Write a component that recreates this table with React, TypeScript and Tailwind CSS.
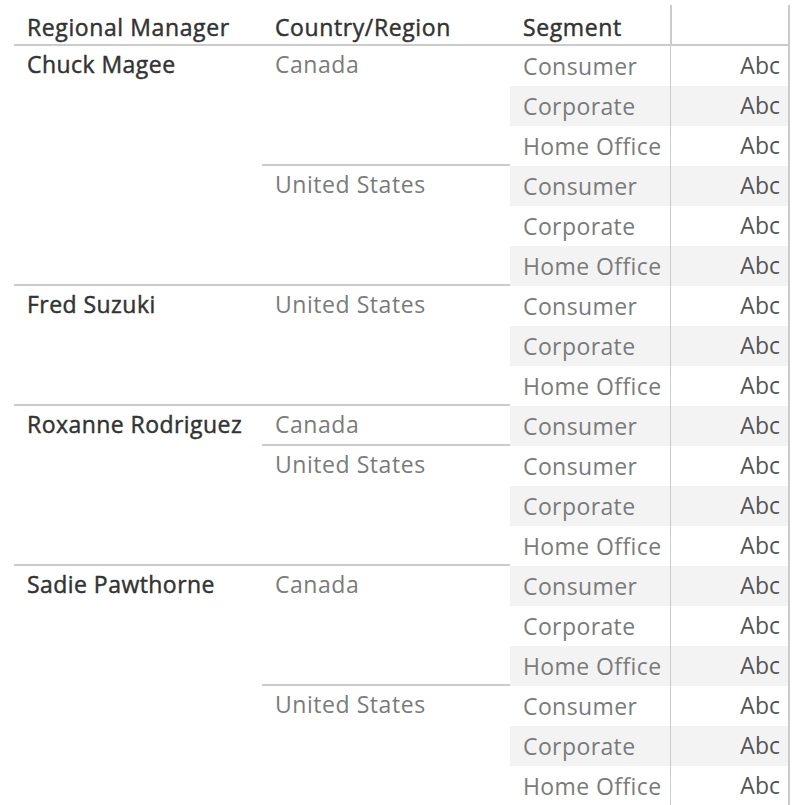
import React from "react";

type Country = { name: string; segments: string[] };
type Manager = { name: string; countries: Country[] };

const ALL = ["Consumer", "Corporate", "Home Office"];

const data: Manager[] = [
  { name: "Chuck Magee", countries: [{ name: "Canada", segments: ALL }, { name: "United States", segments: ALL }] },
  { name: "Fred Suzuki", countries: [{ name: "United States", segments: ALL }] },
  { name: "Roxanne Rodriguez", countries: [{ name: "Canada", segments: ["Consumer"] }, { name: "United States", segments: ALL }] },
  { name: "Sadie Pawthorne", countries: [{ name: "Canada", segments: ALL }, { name: "United States", segments: ALL }] },
];

const headCls =
  "pl-[13px] pt-[12px] text-[23px] leading-[30px] tracking-[0.6px] text-[#333333] whitespace-nowrap [-webkit-text-stroke:0.45px_#333333]";

export default function App() {
  let rowIndex = 0;
  return (
    <div
      className="w-[797px] h-[805px] overflow-hidden bg-white pl-[14px]"
      style={{ fontFamily: '"Open Sans", "Noto Sans", sans-serif' }}
    >
      <div className="w-[776px]">
        {/* header */}
        <div className="flex h-[46px] border-b-2 border-[#cbcbcb]">
          <div className={"w-[248px] " + headCls}>Regional Manager</div>
          <div className={"w-[248px] " + headCls}>Country/Region</div>
          <div className={"w-[160px] " + headCls}>Segment</div>
          <div className="w-[120px] mt-[5px] border-l-2 border-r-2 border-[#cbcbcb]" />
        </div>
        {data.map((m, mi) => (
          <div
            key={m.name}
            className={
              "flex " + (mi > 0 ? "-mt-[2px] border-t-2 border-[#cbcbcb]" : "")
            }
          >
            <div className="w-[248px] shrink-0 pl-[13px] h-[40px] pb-[5px] flex items-center text-[23px] leading-[30px] tracking-[0.45px] text-[#333333] whitespace-nowrap [-webkit-text-stroke:0.45px_#333333]">
              {m.name}
            </div>
            <div className="flex-1">
              {m.countries.map((c, ci) => (
                <div
                  key={c.name}
                  className={
                    "flex " + (ci > 0 ? "-mt-[2px] border-t-2 border-[#cbcbcb]" : "")
                  }
                >
                  <div className="w-[248px] shrink-0 pl-[13px] h-[40px] pb-[4px] flex items-center text-[23px] leading-[30px] tracking-[0.55px] text-[#7b7b7b] whitespace-nowrap">
                    {c.name}
                  </div>
                  <div className="flex-1">
                    {c.segments.map((s) => {
                      const grey = rowIndex % 2 === 1;
                      rowIndex++;
                      return (
                        <div
                          key={s}
                          className={
                            "flex h-[40px] " + (grey ? "bg-[#f3f3f3]" : "bg-white")
                          }
                        >
                          <div className="w-[160px] pl-[13px] flex items-center text-[23px] leading-[30px] tracking-[0.4px] text-[#7b7b7b] whitespace-nowrap">
                            {s}
                          </div>
                          <div className="w-[120px] flex items-center justify-end pr-[8px] pb-[2px] border-l border-r-2 border-[#cbcbcb] text-[23px] leading-[30px] text-[#555555]">
                            Abc
                          </div>
                        </div>
                      );
                    })}
                  </div>
                </div>
              ))}
            </div>
          </div>
        ))}
      </div>
    </div>
  );
}
